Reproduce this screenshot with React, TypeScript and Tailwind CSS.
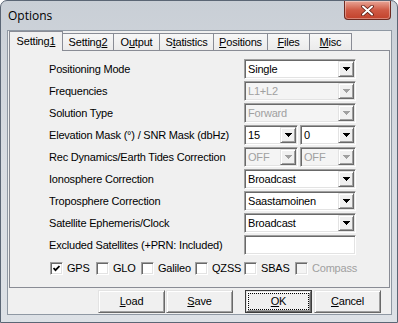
import type { ReactNode } from "react";

// classic win32 3D edges
const sunken =
  "border border-t-[#a0a0a0] border-l-[#a0a0a0] border-r-white border-b-white shadow-[inset_1px_1px_0_#696969,inset_-1px_-1px_0_#e3e3e3]";
const raised =
  "border border-t-[#e3e3e3] border-l-[#e3e3e3] border-r-[#696969] border-b-[#696969] shadow-[inset_1px_1px_0_#ffffff,inset_-1px_-1px_0_#a0a0a0]";

function Arrow({ disabled }: { disabled?: boolean }) {
  return (
    <svg width="7" height="4" viewBox="0 0 7 4" shapeRendering="crispEdges">
      <path d="M0 0h7v1h-1v1h-1v1h-1v1h-1v-1h-1v-1h-1v-1h-1z" fill={disabled ? "#a0a0a0" : "#000"} />
    </svg>
  );
}

interface ComboProps {
  value: string;
  width: string;
  disabled?: boolean;
}

function Combo({ value, width, disabled }: ComboProps) {
  return (
    <div
      className={`flex h-[20px] items-center ${width} ${sunken} ${
        disabled ? "bg-[#f4f4f4] text-[#a0a0a0]" : "bg-white text-black"
      }`}
    >
      <span className="flex-1 pl-[3px] leading-none">{value}</span>
      <div className={`mr-[1px] flex h-[16px] w-[16px] items-center justify-center bg-[#f0f0f0] ${raised}`}>
        <Arrow disabled={disabled} />
      </div>
    </div>
  );
}

function Check({ label, width, checked, disabled }: { label: string; width: string; checked?: boolean; disabled?: boolean }) {
  return (
    <div className={`flex h-[13px] items-center gap-[4px] ${width}`}>
      <div className={`flex h-[13px] w-[13px] items-center justify-center ${sunken} ${disabled ? "bg-[#f4f4f4]" : "bg-white"}`}>
        {checked && (
          <svg width="7" height="7" viewBox="0 0 7 7">
            <polyline points="0.5,3 2.5,5.2 6.5,1" fill="none" stroke="#000" strokeWidth="1.8" />
          </svg>
        )}
      </div>
      <span className={`leading-none ${disabled ? "text-[#a0a0a0]" : "text-black"}`}>{label}</span>
    </div>
  );
}

function Btn({ children, extra, focused }: { children: ReactNode; extra?: string; focused?: boolean }) {
  if (focused) {
    return (
      <div className={`h-[23px] w-[67px] border border-[#3c3c3c] bg-[#f0f0f0] ${extra ?? ""}`}>
        <div className={`flex h-full w-full items-center justify-center p-[1px] ${raised}`}>
          <div className="flex h-full w-full items-center justify-center border border-dotted border-black">{children}</div>
        </div>
      </div>
    );
  }
  return (
    <div className={`flex h-[23px] w-[67px] items-center justify-center bg-[#f0f0f0] ${raised} ${extra ?? ""}`}>{children}</div>
  );
}

const tabs: { pre: string; key: string; post: string; width: string }[] = [
  { pre: "Setting", key: "2", post: "", width: "w-[51px]" },
  { pre: "O", key: "u", post: "tput", width: "w-[46px]" },
  { pre: "S", key: "t", post: "atistics", width: "w-[54px]" },
  { pre: "", key: "P", post: "ositions", width: "w-[54px]" },
  { pre: "", key: "F", post: "iles", width: "w-[42px]" },
  { pre: "", key: "M", post: "isc", width: "w-[42px]" },
];

export default function App() {
  const rows: [string, ReactNode][] = [
    ["Positioning Mode", <Combo value="Single" width="w-[112px]" />],
    ["Frequencies", <Combo value="L1+L2" width="w-[112px]" disabled />],
    ["Solution Type", <Combo value="Forward" width="w-[112px]" disabled />],
    [
      "Elevation Mask (°) / SNR Mask (dbHz)",
      <div className="flex gap-[2px]">
        <Combo value="15" width="w-[54px]" />
        <Combo value="0" width="w-[56px]" />
      </div>,
    ],
    [
      "Rec Dynamics/Earth Tides Correction",
      <div className="flex gap-[2px]">
        <Combo value="OFF" width="w-[54px]" disabled />
        <Combo value="OFF" width="w-[56px]" disabled />
      </div>,
    ],
    ["Ionosphere Correction", <Combo value="Broadcast" width="w-[112px]" />],
    ["Troposphere Correction", <Combo value="Saastamoinen" width="w-[112px]" />],
    ["Satellite Ephemeris/Clock", <Combo value="Broadcast" width="w-[112px]" />],
    ["Excluded Satellites (+PRN: Included)", <div className={`h-[20px] w-[112px] bg-white ${sunken}`} />],
  ];

  return (
    <div className="h-[323px] w-[398px] overflow-hidden rounded-t-[7px] border border-[#5b6675] bg-gradient-to-b from-[#c9cfd6] via-[#d8dce2] to-[#dde1e6] font-['Liberation_Sans',Arial,sans-serif] text-[11px] tracking-[-0.2px] text-black">
      {/* title bar */}
      <div className="flex h-[29px]">
        <span className="self-center pl-[7px] font-['Open_Sans',sans-serif] text-[12px] tracking-normal text-black">Options</span>
        <div className="ml-auto mr-[6px] flex h-[19px] w-[47px] items-center justify-center rounded-b-[4px] border border-t-0 border-[#6e2a20] bg-gradient-to-b from-[#e8a597] via-[#cf5a45] to-[#c2412b] shadow-[inset_0_0_0_1px_rgba(255,255,255,0.35)]">
          <svg width="13" height="11" viewBox="0 0 13 11">
            <path d="M2 1.5 L11 9.5 M11 1.5 L2 9.5" stroke="#5a1a12" strokeWidth="3.6" strokeLinecap="round" />
            <path d="M2 1.5 L11 9.5 M11 1.5 L2 9.5" stroke="#ffffff" strokeWidth="2" strokeLinecap="round" />
          </svg>
        </div>
      </div>

      {/* client area */}
      <div className="ml-[6px] h-[285px] w-[385px] border border-[#8f98a3] bg-[#f0f0f0]">
        {/* tab strip */}
        <div className="flex h-[19px] items-end pl-[1px]">
          <div className="relative z-10 mb-[-1px] flex h-[20px] w-[54px] items-center justify-center border border-b-0 border-[#898c95] bg-[#f0f0f0] pb-[1px]">
            <span>
              Setting<span className="underline">1</span>
            </span>
          </div>
          {tabs.map((t) => (
            <div
              key={t.pre + t.key}
              className={`flex h-[17px] items-center justify-center border-t border-r border-[#898c95] bg-gradient-to-b from-[#f7f7f7] to-[#ebebeb] ${t.width}`}
            >
              <span>
                {t.pre}
                <span className="underline">{t.key}</span>
                {t.post}
              </span>
            </div>
          ))}
        </div>

        {/* panel */}
        <div className="ml-[1px] h-[238px] w-[381px] border border-[#898c95] bg-[#f0f0f0] pl-[39px] pt-[8px]">
          <div className="flex flex-col gap-[2px]">
            {rows.map(([label, control]) => (
              <div key={label} className="flex h-[20px] items-center">
                <span className="w-[195px] leading-none">{label}</span>
                {control}
              </div>
            ))}
          </div>
          <div className="ml-[1px] mt-[7px] flex">
            <Check label="GPS" width="w-[46px]" checked />
            <Check label="GLO" width="w-[45px]" />
            <Check label="Galileo" width="w-[54px]" />
            <Check label="QZSS" width="w-[49px]" />
            <Check label="SBAS" width="w-[51px]" />
            <Check label="Compass" width="w-[70px]" disabled />
          </div>
        </div>

        {/* buttons */}
        <div className="mt-[2px] flex pl-[90px]">
          <Btn>
            <span className="underline">L</span>oad
          </Btn>
          <Btn extra="ml-[1px]">
            <span className="underline">S</span>ave
          </Btn>
          <Btn extra="ml-[12px]" focused>
            <span className="underline">O</span>K
          </Btn>
          <Btn extra="ml-[2px]">
            <span className="underline">C</span>ancel
          </Btn>
        </div>
      </div>
    </div>
  );
}
